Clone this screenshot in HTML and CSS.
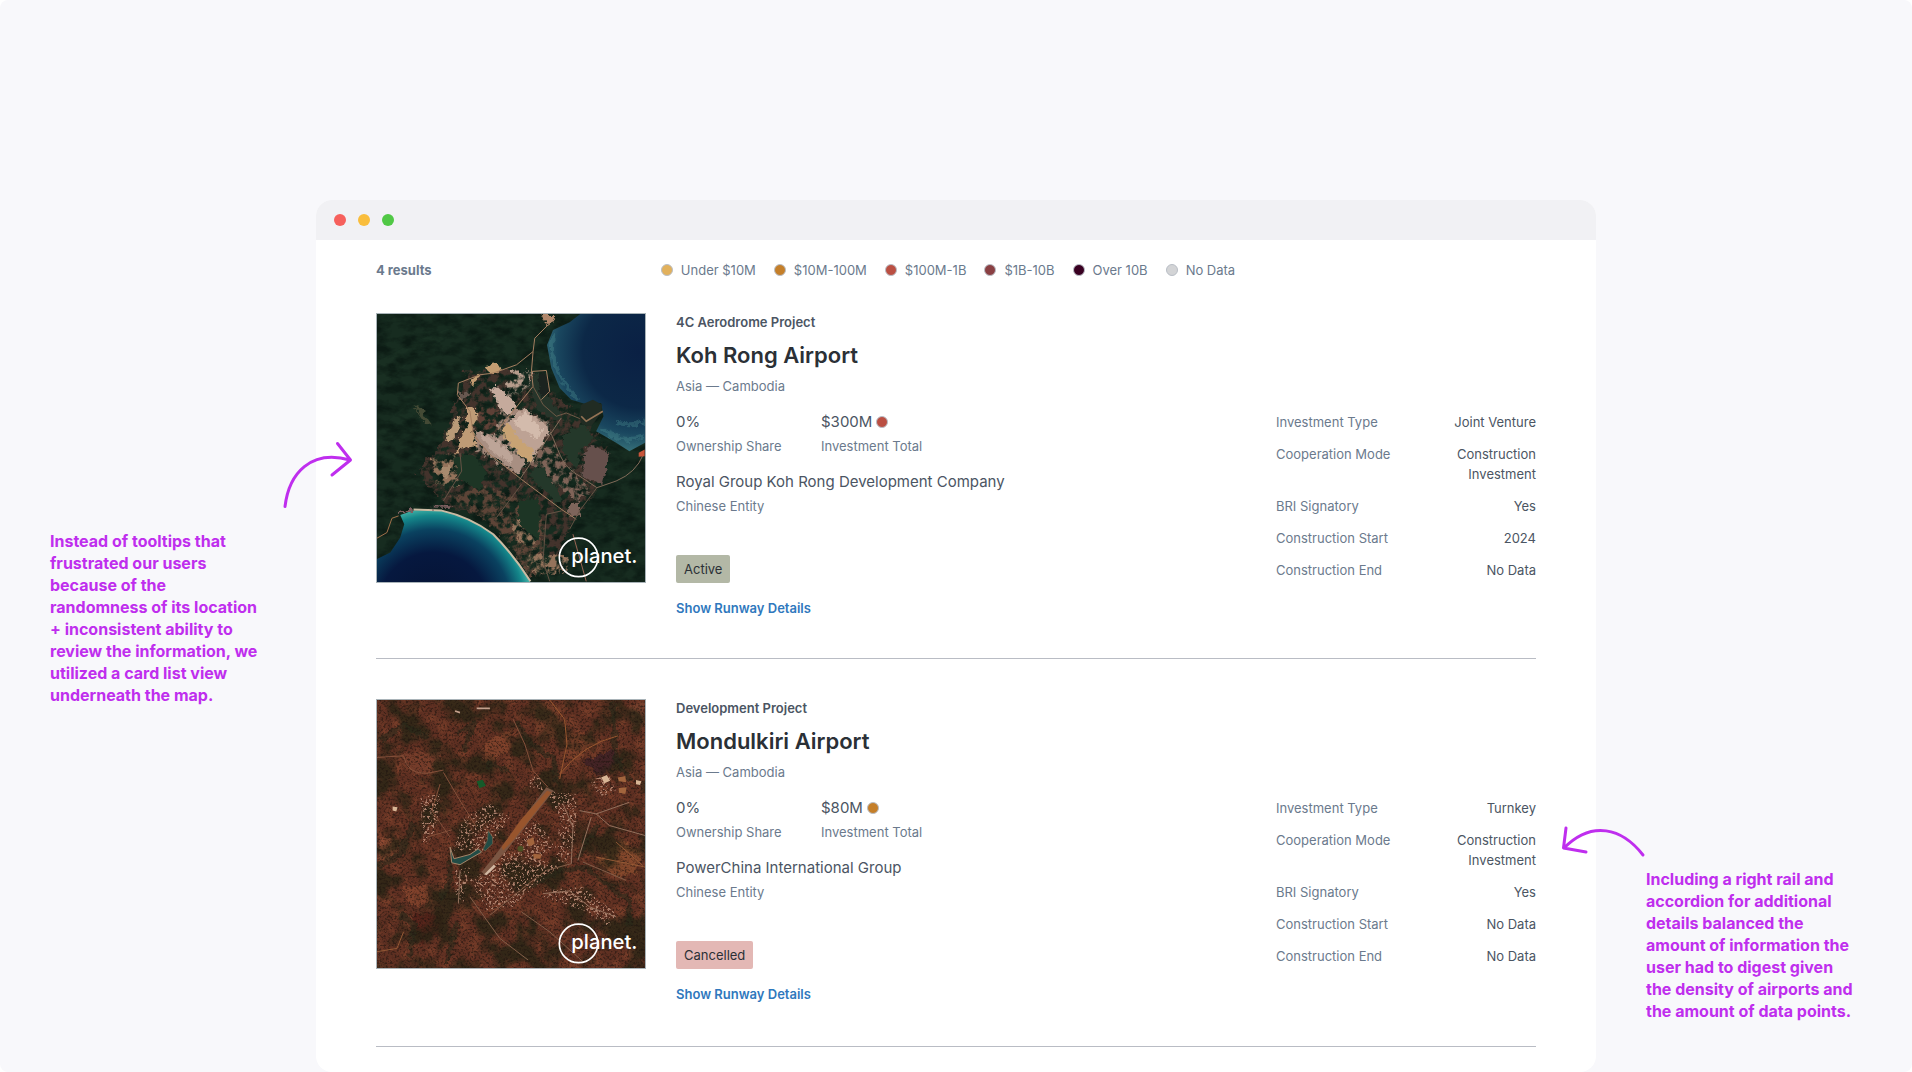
FILE: index.html
```html
<!DOCTYPE html>
<html lang="en">
<head>
    <meta charset="UTF-8">
    <meta name="viewport" content="width=device-width, initial-scale=1.0">
    <title>Airport Projects</title>
    <link rel="stylesheet" href="styles.css">
</head>
<body>
    <div class="page">
        <aside class="note note-left">
            <svg class="arrow" width="72" height="72" viewBox="282 440 72 72" aria-hidden="true">
                <path d="M285 506.500C289 473 311 449 350 460M337.500 443.500L350.500 460L332 475"/>
            </svg>
            <p>Instead of tooltips that frustrated our users because of the randomness of its location + inconsistent ability to review the information, we utilized a card list view underneath the map.</p>
        </aside>

        <main class="window">
            <div class="titlebar">
                <span class="light red"></span>
                <span class="light yellow"></span>
                <span class="light green"></span>
            </div>
            <div class="content">
                <div class="summary">
                    <strong class="count">4 results</strong>
                    <ul class="legend">
                        <li><span class="dot under10m"></span>Under $10M</li>
                        <li><span class="dot to100m"></span>$10M-100M</li>
                        <li><span class="dot to1b"></span>$100M-1B</li>
                        <li><span class="dot to10b"></span>$1B-10B</li>
                        <li><span class="dot over10b"></span>Over 10B</li>
                        <li><span class="dot nodata"></span>No Data</li>
                    </ul>
                </div>

                <article class="card">
                    <svg class="photo" viewBox="20 17 807 807" role="img" aria-label="Satellite view of Koh Rong Airport">
                        <defs>
                            <radialGradient id="sea" gradientUnits="userSpaceOnUse" cx="810" cy="130" r="310">
                                <stop offset="0" stop-color="#0a2044"/>
                                <stop offset="0.55" stop-color="#0c2847"/>
                                <stop offset="0.8" stop-color="#1a475f"/>
                                <stop offset="1" stop-color="#3a777d"/>
                            </radialGradient>
                            <radialGradient id="bay" gradientUnits="userSpaceOnUse" cx="190" cy="900" r="300">
                                <stop offset="0" stop-color="#051232"/>
                                <stop offset="0.55" stop-color="#06183f"/>
                                <stop offset="0.78" stop-color="#0a4260"/>
                                <stop offset="0.92" stop-color="#14868a"/>
                                <stop offset="1" stop-color="#45b3a8"/>
                            </radialGradient>
                            <!-- dark mottling for tree cover -->
                            <filter id="trees" x="0" y="0" width="1" height="1">
                                <feTurbulence type="fractalNoise" baseFrequency="0.02 0.035" numOctaves="5" seed="4"/>
                                <feColorMatrix values="0 0 0 0 0.03  0 0 0 0 0.08  0 0 0 0 0.06  0 2.5 0 0 -0.9"/>
                            </filter>
                            <!-- breaks bare ground up into patches -->
                            <filter id="rough" x="-0.1" y="-0.1" width="1.2" height="1.2">
                                <feTurbulence type="fractalNoise" baseFrequency="0.05" numOctaves="5" seed="9" result="n"/>
                                <feDisplacementMap in="SourceGraphic" in2="n" scale="40" xChannelSelector="R" yChannelSelector="G" result="d"/>
                                <feColorMatrix in="n" values="0 0 0 0 0  0 0 0 0 0  0 0 0 0 0  3 3 0 0 -2.5" result="m"/>
                                <feComposite in="d" in2="m" operator="in"/>
                            </filter>
                            <filter id="soft" x="-0.2" y="-0.2" width="1.4" height="1.4">
                                <feTurbulence type="fractalNoise" baseFrequency="0.06" numOctaves="4" seed="2" result="n"/>
                                <feDisplacementMap in="SourceGraphic" in2="n" scale="26" xChannelSelector="R" yChannelSelector="G" result="d"/>
                                <feGaussianBlur in="d" stdDeviation="1.5"/>
                            </filter>
                        </defs>
                        <rect x="20" y="17" width="807" height="807" fill="#172c20"/>
                        <path d="M20 160C120 110 200 60 280 55C240 90 130 130 20 260ZM20 370C100 300 130 260 240 200L200 280C140 300 90 360 20 440Z" fill="#1b3224" opacity="0.6"/>
                        <rect x="20" y="17" width="807" height="807" filter="url(#trees)" opacity="0.7"/>
                        <g filter="url(#rough)">
                            <path d="M290 190L480 190L600 300L660 350L720 430L690 540L610 650L560 760L480 800L380 640L230 600L140 500L200 430L260 280Z" fill="#43332c"/>
                            <path d="M240 570L340 540L460 580L520 640L530 800L480 810L400 690L320 620Z" fill="#5d4437"/>
                            <path d="M480 470L540 410L620 500L660 560L620 580L560 530Z" fill="#806458"/>
                            <path d="M330 290L420 330L370 380L320 340Z" fill="#5e4036"/>
                            <path d="M430 190L495 190L480 235L400 280Z" fill="#b69c8c"/>
                            <path d="M190 450L260 440L270 540L190 520ZM430 640L490 650L500 720L440 700ZM470 740L600 750L590 800L490 800Z" fill="#94735b"/>
                            <path d="M400 290L540 340L520 420L440 500L320 430L310 370L380 380Z" fill="#a28678"/>
                        </g>
                        <g filter="url(#soft)">
                            <path d="M480 230L500 190L530 260L575 320L565 340L500 300Z" fill="#26352a"/>
                            <path d="M580 380L640 350L670 390L630 430L620 480L580 440ZM480 500L510 470L580 570L560 590Z" fill="#24382a"/>
                            <path d="M250 450L310 435L350 500L330 550L260 510ZM440 580L510 570L510 700L450 650Z" fill="#1d3525"/>
                            <path d="M360 240L385 235L440 285L420 325L390 300Z" fill="#c5aa9c"/>
                            <path d="M410 350L460 300L545 365L480 465L445 425Z" fill="#bda294"/>
                            <path d="M430 345L465 310L520 365L500 395Z" fill="#d3bbac"/>
                            <path d="M390 370L415 345L445 385L495 430L480 465L440 430Z" fill="#c8a374"/>
                            <path d="M315 370L370 385L465 460L455 500L370 450L325 400Z" fill="#a88f82"/>
                            <path d="M330 375L390 405L430 445L420 465L360 425Z" fill="#bda598"/>
                            <path d="M262 435L270 390L295 350L285 295L318 300L320 335L305 360L320 415L290 420Z" fill="#bf9b76"/>
                            <path d="M225 400L250 335L272 330L265 370L240 400Z" fill="#b99a78"/>
                            <path d="M205 490L235 465L248 490L230 510Z" fill="#a78a6e"/>
                            <path d="M340 172L380 165L395 190L355 193ZM295 220L330 200L315 228Z" fill="#c39d72"/>
                            <path d="M515 20L560 20L550 45L530 50Z" fill="#b0876b"/>
                            <path d="M130 295L150 300L185 350L165 345Z" fill="#444a35"/>
                            <path d="M265 250L298 255L290 275L268 272Z" fill="#685850"/>
                            <path d="M500 200L530 195L538 255L515 270Z" fill="#1c231f"/>
                            <path d="M655 410L720 435L695 535L635 500Z" fill="#66504c"/>
                            <path d="M595 595L632 582L630 630L600 620Z" fill="#7e655b"/>
                        </g>
                        <g fill="none" stroke="#a57e60" stroke-width="3" stroke-linejoin="round">
                            <path d="M535 50L495 90L490 130L440 170L370 195L330 200L265 225L262 260L300 310L310 380L360 440L455 515L575 605L620 635"/>
                            <path d="M490 130L485 190L490 235L385 365M485 190L530 187L540 250L515 275"/>
                            <path d="M490 235L520 290L560 325L590 315L650 340L700 310" stroke="#6f5a47"/>
                            <path d="M575 330L450 515M540 370C575 440 570 470 630 505L682 540L740 520Q800 495 822 440" stroke="#826b59"/>
                            <path d="M682 540L630 610L600 665M575 610L530 620L520 760L540 822M455 530L380 630M270 435L275 490L220 580" stroke="#655345"/>
                            <path d="M610 680L650 822" stroke="#9b6554"/>
                        </g>
                        <path d="M632 17L600 42L550 65L532 110L545 180L570 240L605 275L645 287L695 285L702 325L680 370L740 405L780 430L827 405V17Z" fill="url(#sea)"/>
                        <path d="M556 80C526 130 575 220 620 272M692 362Q760 410 827 385M740 345Q790 355 827 340" fill="none" stroke="#4c8e91" stroke-width="12" opacity="0.35" filter="url(#soft)"/>
                        <path d="M635 290L670 275L698 290L695 315L665 355L638 350L628 325Z" fill="#212c23"/>
                        <path d="M700 310L650 340L635 325" fill="none" stroke="#957355" stroke-width="5"/>
                        <path d="M808 435L826 425V445L808 447Z" fill="#c8553a"/>
                        <path d="M20 755L60 735L90 690L102 650L90 622L130 608L215 608Q300 628 370 680Q430 740 482 824H20Z" fill="url(#bay)"/>
                        <path d="M130 606L215 609Q300 628 370 680Q430 740 482 822" fill="none" stroke="#cbbba3" stroke-width="6"/>
                        <path d="M85 615L125 605M185 596L245 597" fill="none" stroke="#7c5f60" stroke-width="8" filter="url(#soft)"/>
                        <path d="M20 692L50 675L65 632L85 625" fill="none" stroke="#a06f4a" stroke-width="3"/>
                        <g class="watermark">
                            <circle cx="627" cy="750" r="58"/>
                            <text x="605" y="768">planet.</text>
                        </g>
                    </svg>

                    <div class="info">
                        <div class="project">4C Aerodrome Project</div>
                        <h2 class="name">Koh Rong Airport</h2>
                        <div class="place">Asia — Cambodia</div>
                        <div class="stats">
                            <div>
                                <div class="value">0%</div>
                                <div class="label">Ownership Share</div>
                            </div>
                            <div>
                                <div class="value">$300M <span class="dot to1b"></span></div>
                                <div class="label">Investment Total</div>
                            </div>
                        </div>
                        <div class="entity">
                            <div class="value">Royal Group Koh Rong Development Company</div>
                            <div class="label">Chinese Entity</div>
                        </div>
                        <span class="status active">Active</span>
                        <button class="more" type="button">Show Runway Details</button>
                    </div>

                    <dl class="details">
                        <div><dt>Investment Type</dt><dd>Joint Venture</dd></div>
                        <div><dt>Cooperation Mode</dt><dd>Construction<br>Investment</dd></div>
                        <div><dt>BRI Signatory</dt><dd>Yes</dd></div>
                        <div><dt>Construction Start</dt><dd>2024</dd></div>
                        <div><dt>Construction End</dt><dd>No Data</dd></div>
                    </dl>
                </article>

                <article class="card">
                    <svg class="photo" viewBox="20 17 807 807" role="img" aria-label="Satellite view of Mondulkiri Airport">
                        <defs>
                            <filter id="scrub" x="0" y="0" width="1" height="1">
                                <feTurbulence type="fractalNoise" baseFrequency="0.012" numOctaves="6" seed="12"/>
                                <feColorMatrix values="0 0 0 0 0.14  0 0 0 0 0.14  0 0 0 0 0.08  0 5 0 0 -2.3"/>
                            </filter>
                            <filter id="soil" x="0" y="0" width="1" height="1">
                                <feTurbulence type="fractalNoise" baseFrequency="0.03" numOctaves="5" seed="21"/>
                                <feColorMatrix values="0 0 0 0 0.56  0 0 0 0 0.29  0 0 0 0 0.19  3 0 0 0 -1.3"/>
                            </filter>
                            <!-- fine dark grain over the whole area -->
                            <filter id="grain" x="0" y="0" width="1" height="1">
                                <feTurbulence type="fractalNoise" baseFrequency="0.15" numOctaves="3" seed="31"/>
                                <feColorMatrix values="0 0 0 0 0.12  0 0 0 0 0.08  0 0 0 0 0.06  0 0 4 0 -1.9"/>
                            </filter>
                            <!-- small pale specks for houses -->
                            <filter id="houses" x="0" y="0" width="1" height="1">
                                <feTurbulence type="fractalNoise" baseFrequency="0.14" numOctaves="3" seed="7" result="n"/>
                                <feColorMatrix in="n" values="0 0 0 0 0.68  0 0 0 0 0.5  0 0 0 0 0.42  8 0 0 0 -4.4" result="m"/>
                                <feComposite in="m" in2="SourceAlpha" operator="in"/>
                            </filter>
                        </defs>
                        <rect x="20" y="17" width="807" height="807" fill="#5f3022"/>
                        <rect x="20" y="17" width="807" height="807" filter="url(#soil)" opacity="0.5"/>
                        <g filter="url(#soft)" opacity="0.8">
                            <path d="M490 30L560 25L580 90L550 140L500 110Z" fill="#743e29"/>
                            <path d="M590 120L640 110L680 150L620 200L590 190Z" fill="#7d412a"/>
                            <path d="M340 150L420 105L430 160L380 190L340 215Z" fill="#84442c"/>
                            <path d="M90 180L210 170L220 230L130 240Z" fill="#7b402c"/>
                            <path d="M30 430L75 440L80 480L40 510L20 490Z" fill="#9a5036"/>
                            <path d="M95 580L170 575L180 630L120 640Z" fill="#85442d"/>
                            <path d="M640 200L730 170L750 200L690 250Z" fill="#3d2026"/>
                            <path d="M680 500L760 440L820 480L800 540L740 550Z" fill="#8b4d2e"/>
                            <path d="M130 660L220 660L220 710L150 750L130 720Z" fill="#522119"/>
                            <path d="M780 30L827 20V80L790 120Z" fill="#77422e"/>
                        </g>
                        <rect x="20" y="17" width="807" height="807" filter="url(#scrub)" opacity="0.75"/>
                        <g fill="none" stroke="#26291a" stroke-width="16" opacity="0.55" filter="url(#soft)">
                            <path d="M440 80Q470 150 550 190L560 270M730 20L740 190L780 260"/>
                            <path d="M20 520L90 480L130 390M210 620L240 560L240 500M470 580L580 530L650 520L720 580L780 620V700"/>
                            <path d="M260 120L310 90L280 170M30 140L100 90L170 130M350 210L420 230"/>
                            <path d="M620 500L660 430L690 390M90 660L130 690L120 790M230 810L260 690"/>
                        </g>
                        <rect x="20" y="17" width="807" height="807" filter="url(#grain)" opacity="0.6"/>
                        <g filter="url(#houses)">
                            <path d="M530 290L620 300L620 400L600 510L560 500L570 370Z"/>
                            <path d="M280 370L360 330L420 370L380 430L340 470L250 470Z"/>
                            <path d="M300 560L410 470L480 480L570 520L470 600L440 640L350 650Z"/>
                            <path d="M520 590L640 580L740 660L720 700L640 650L520 610Z"/>
                            <path d="M420 430L500 380L560 460L490 500Z"/>
                            <path d="M660 260L720 240L740 290L690 310ZM480 240L510 250L520 290L480 280Z"/>
                            <path d="M150 310L210 300L200 400L160 470ZM255 530L300 520L280 630L255 600Z"/>
                        </g>
                        <g fill="none" stroke="#85503a" stroke-width="3" stroke-linejoin="round">
                            <path d="M540 17L585 75L592 150L570 255M570 240Q640 150 745 125" stroke="#9a572f"/>
                            <path d="M20 190L100 185Q110 240 170 238L220 228M430 75L465 150L490 230L535 280"/>
                            <path d="M220 235L270 320L320 400M210 270L185 350L240 430M170 430L245 408"/>
                            <path d="M580 330L610 400L605 510M630 350L680 360L780 325M680 360L720 395L827 425M665 370L625 500" stroke="#94705c"/>
                            <path d="M605 510L530 530L470 575L360 665M640 505L770 560M300 610L390 735L475 800M455 655L540 715L640 805" stroke="#835d48"/>
                            <path d="M520 600L600 592L660 640L740 670M265 630L270 530" stroke="#94705c"/>
                            <path d="M20 775L80 765L100 715M680 490L827 520M740 445L820 515" stroke="#955935"/>
                            <path d="M320 42L360 42M255 50L270 55" stroke="#c4a18d" stroke-width="5"/>
                        </g>
                        <path d="M530 280L552 290L410 470L368 515L345 545L335 535L375 485Z" fill="#7b5643"/>
                        <path d="M532 290L545 295L430 440L400 470L395 460L455 375Z" fill="#98552d"/>
                        <path d="M343 542L372 512L378 518L350 545Z" fill="#d2b8a2"/>
                        <path d="M240 460L252 495L300 482L325 465L335 475L300 495L270 513L245 507Z" fill="#224c46" stroke="#a68669" stroke-width="3"/>
                        <path d="M355 410L368 430L368 450L345 472L340 465L352 440Z" fill="#224c46" stroke="#76664f" stroke-width="2"/>
                        <path d="M320 262L338 257L348 275L328 283Z" fill="#165a2a"/>
                        <path d="M695 250L712 243L722 260L705 268ZM67 338L82 340L78 353L67 350ZM800 258L816 262L812 273L800 271Z" fill="#d8b696"/>
                        <path d="M745 250L768 246L770 265L748 262ZM748 282L772 280L768 300L748 296ZM470 440L490 430L495 450L478 458ZM490 480L515 482L512 495L492 494Z" fill="#a2653d"/>
                        <circle cx="452" cy="465" r="9" fill="#4b5024"/>
                        <g class="watermark">
                            <circle cx="627" cy="750" r="58"/>
                            <text x="605" y="768">planet.</text>
                        </g>
                    </svg>

                    <div class="info">
                        <div class="project">Development Project</div>
                        <h2 class="name">Mondulkiri Airport</h2>
                        <div class="place">Asia — Cambodia</div>
                        <div class="stats">
                            <div>
                                <div class="value">0%</div>
                                <div class="label">Ownership Share</div>
                            </div>
                            <div>
                                <div class="value">$80M <span class="dot to100m"></span></div>
                                <div class="label">Investment Total</div>
                            </div>
                        </div>
                        <div class="entity">
                            <div class="value">PowerChina International Group</div>
                            <div class="label">Chinese Entity</div>
                        </div>
                        <span class="status cancelled">Cancelled</span>
                        <button class="more" type="button">Show Runway Details</button>
                    </div>

                    <dl class="details">
                        <div><dt>Investment Type</dt><dd>Turnkey</dd></div>
                        <div><dt>Cooperation Mode</dt><dd>Construction<br>Investment</dd></div>
                        <div><dt>BRI Signatory</dt><dd>Yes</dd></div>
                        <div><dt>Construction Start</dt><dd>No Data</dd></div>
                        <div><dt>Construction End</dt><dd>No Data</dd></div>
                    </dl>
                </article>
            </div>
        </main>

        <aside class="note note-right">
            <svg class="arrow" width="88" height="36" viewBox="1560 824 88 36" aria-hidden="true">
                <path d="M1643 855C1622 828 1592 820 1564 848M1566 828L1563.500 848L1586 852"/>
            </svg>
            <p>Including a right rail and accordion for additional details balanced the amount of information the user had to digest given the density of airports and the amount of data points.</p>
        </aside>
    </div>
</body>
</html>
```
FILE: styles.css
```css
*{
    box-sizing: border-box;
}
body{
    margin:0;
    background-color: #fff;
    font-family: Inter, "Liberation Sans", sans-serif;
    font-size: 13px;
    line-height: 20px;
    color:#6b7a8d;
}
.page{
    display: grid;
    grid-template-columns: minmax(0, 1fr) minmax(0, 1280px) minmax(0, 1fr);
    min-height: 100vh;
    padding-top: 200px;
    background-color: #f8f8fb;
    border-radius: 8px;
}

/* side notes */
.note{
    position: relative;
    z-index: 1;
    padding: 0 54px 0 50px;
    color:#bf2eee;
    font-size: 16px;
    font-weight: 700;
    line-height: 22px;
}
.note p{
    margin:0;
}
.note-left{
    padding-top: 330px;
}
.note-right{
    padding-top: 668px;
}
.arrow{
    position: absolute;
    fill: none;
    stroke: #bf2eee;
    stroke-width: 3;
    stroke-linecap: round;
    stroke-linejoin: round;
}
.note-left .arrow{
    top: 240px;
    right: -38px;
}
.note-right .arrow{
    top: 624px;
    left: -36px;
}

/* browser window */
.window{
    background-color: #fff;
    border-radius: 16px;
    overflow: hidden;
}
.titlebar{
    display: flex;
    align-items: center;
    gap: 12px;
    height: 40px;
    padding: 0 18px;
    background-color: #f1f1f4;
}
.light{
    width: 12px;
    height: 12px;
    border-radius: 50%;
}
.red{
    background-color: #f6605c;
}
.yellow{
    background-color: #f9bd3c;
}
.green{
    background-color: #50c845;
}
.content{
    padding: 20px 60px 24px;
}

/* count and legend */
.summary{
    display: grid;
    grid-template-columns: 1fr auto 1fr;
    margin-bottom: 32px;
}
.count{
    font-weight: 700;
}
.legend{
    display: flex;
    gap: 18px;
    margin: 0;
    padding: 0 16px 0 0;
    list-style: none;
}
.legend li{
    display: flex;
    align-items: center;
    gap: 8px;
}
.dot{
    display: inline-block;
    width: 12px;
    height: 12px;
    border: 1px solid #b9bec6;
    border-radius: 50%;
}
.under10m{
    background-color: #e2b15c;
}
.to100m{
    background-color: #c57f29;
}
.to1b{
    background-color: #bb4f42;
}
.to10b{
    background-color: #8a4043;
}
.over10b{
    background-color: #390021;
}
.nodata{
    background-color: #d3d4d6;
}

/* cards */
.card{
    display: grid;
    grid-template-columns: 270px 1fr 260px;
    column-gap: 30px;
    align-items: start;
    padding-bottom: 40px;
    border-bottom: 1px solid #b9bcc4;
}
.card + .card{
    margin-top: 39px;
}
.card:last-child{
    padding-bottom: 42px;
}
.photo{
    display: block;
    width: 100%;
    margin-top: 1px;
    border: 1px solid #a9b3b8;
}
.photo filter{
    color-interpolation-filters: sRGB;
}
.watermark circle{
    fill: none;
    stroke: #fff;
    stroke-width: 5;
}
.watermark text{
    fill: #fff;
    font-family: Inter, sans-serif;
    font-size: 61px;
    font-weight: 500;
}
.info{
    display: flex;
    flex-direction: column;
    align-items: flex-start;
}
.project{
    color:#4b5563;
    font-weight: 600;
}
.name{
    margin: 8px 0 6px;
    color:#2b3036;
    font-size: 22px;
    font-weight: 600;
    line-height: 30px;
}
.stats{
    display: grid;
    grid-template-columns: 145px 145px;
    margin: 14px 0;
}
.value{
    display: flex;
    align-items: center;
    gap: 4px;
    margin-bottom: 2px;
    color:#4b5563;
    font-size: 15px;
    line-height: 24px;
}
.status{
    margin: 39px 0 15px;
    padding: 4px 8px;
    border-radius: 2px;
    color:#2b3036;
}
.active{
    background-color: #b3b8a6;
}
.cancelled{
    background-color: #e3b8b5;
}
.more{
    padding: 0;
    border: 0;
    background: none;
    color:#2f78bd;
    font: inherit;
    font-weight: 600;
    cursor: pointer;
}
.details{
    display: grid;
    gap: 12px;
    margin: 100px 0 0;
}
.details div{
    display: flex;
    justify-content: space-between;
}
.details dd{
    margin:0;
    color:#4b5563;
    text-align: right;
}
```
